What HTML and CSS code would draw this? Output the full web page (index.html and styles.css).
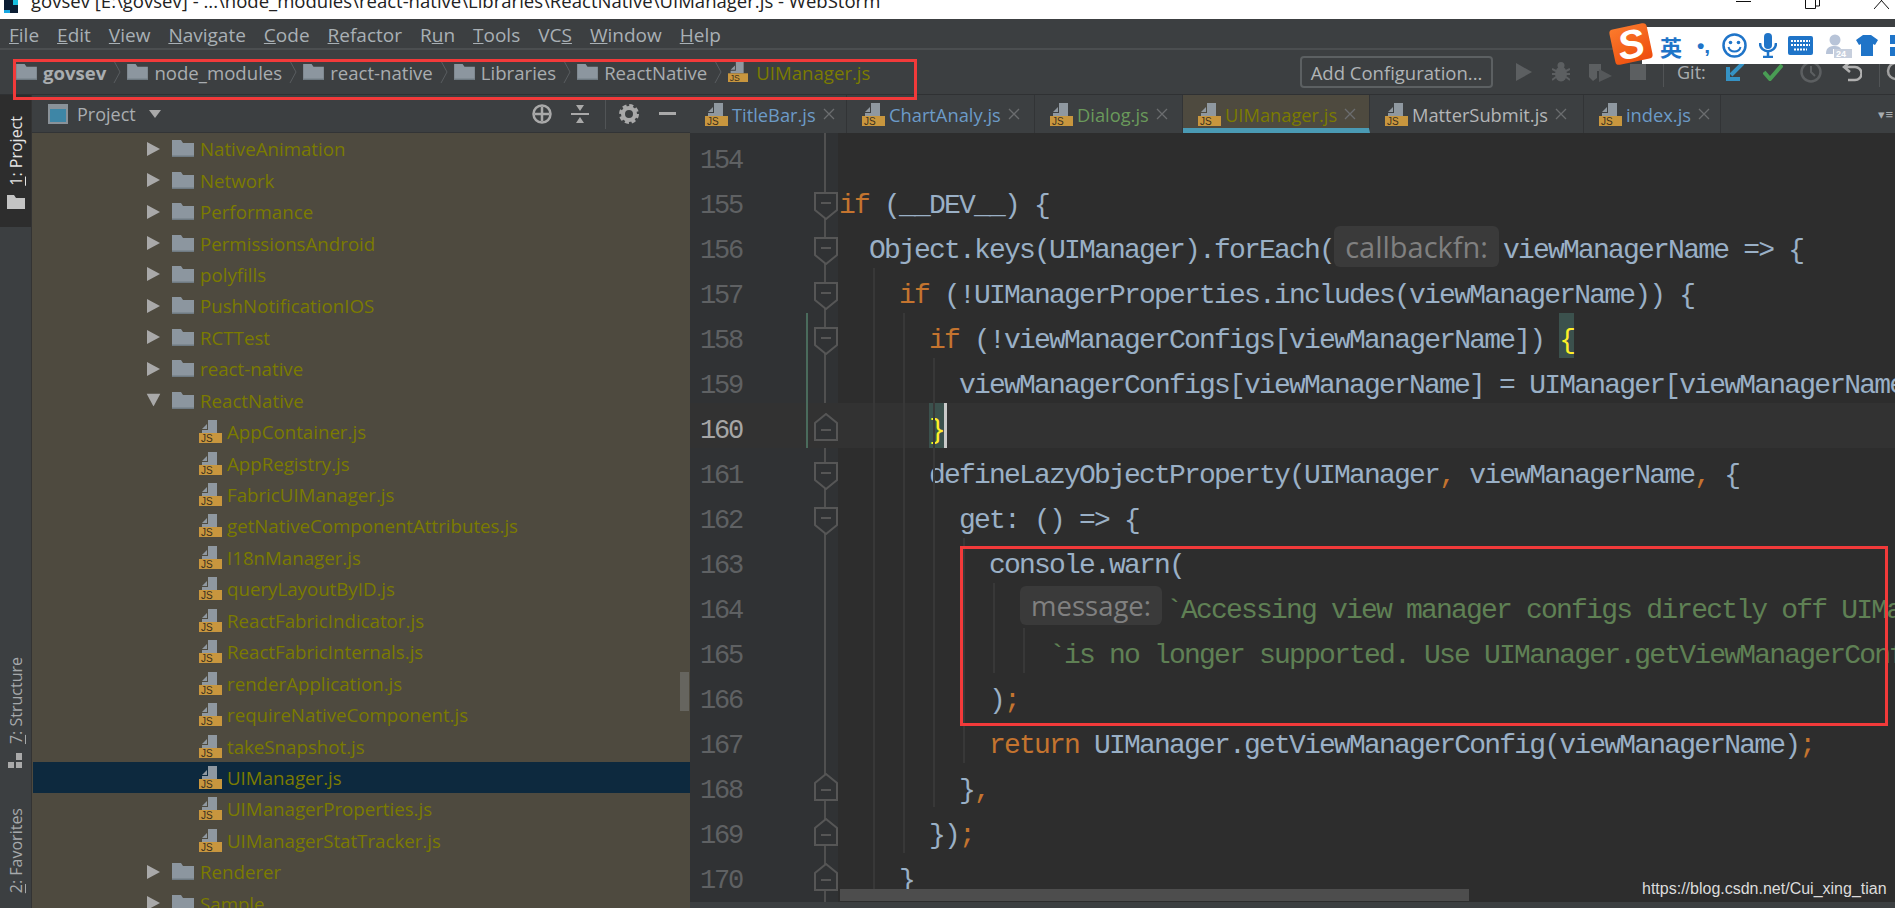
FILE: index.html
```html
<!DOCTYPE html>
<html lang="en">
<head>
<meta charset="utf-8">
<title>WebStorm</title>
<link rel="stylesheet" href="styles.css">
</head>
<body>
<svg class="defs" width="0" height="0" aria-hidden="true">
  <symbol id="js" viewBox="0 0 23 23">
    <path d="M3 13V10H9V0H18V13Z" fill="#8f98a0"/>
    <path d="M3 9L8 4V9Z" fill="#8f98a0"/>
    <rect x="0" y="13" width="23" height="10" fill="#c8963e"/>
    <text x="2" y="22" class="jst">JS</text>
  </symbol>
  <symbol id="folder" viewBox="0 0 22 17">
    <path d="M0 17V0H9L11 3H22V17Z" fill="#8c969f"/>
    <rect y="15.500" width="22" height="1.500" fill="#6f7a82"/>
  </symbol>
  <symbol id="arrow" viewBox="0 0 13 14"><path d="M0 0L13 7L0 14Z" fill="#a9a9a9"/></symbol>
  <symbol id="chev" viewBox="0 0 8 22"><path d="M1 0L7 11L1 22" fill="none" stroke="#595d60" stroke-width="1"/></symbol>
  <symbol id="fd" viewBox="0 0 24 28"><path d="M1 1H23V18L12 27L1 18Z" fill="#303234" stroke="#565656" stroke-width="2"/><path d="M7 11H17" stroke="#565656" stroke-width="2"/></symbol>
  <symbol id="fu" viewBox="0 0 24 28"><path d="M1 27H23V10L12 1L1 10Z" fill="#303234" stroke="#565656" stroke-width="2"/><path d="M7 17H17" stroke="#565656" stroke-width="2"/></symbol>
  <symbol id="x" viewBox="0 0 12 12"><path d="M1 1L11 11M11 1L1 11" stroke="#6b6d6f" stroke-width="1.300"/></symbol>
</svg>

<div class="app">
  <header class="title">
    <svg class="title-icon" width="14" height="13" viewBox="0 0 14 13"><rect width="14" height="13" fill="#0b1d33"/><rect x="0" y="10" width="6" height="3" fill="#17a6e0"/><rect x="9" y="0" width="5" height="5" fill="#17c0e0"/></svg>
    <span class="title-text">govsev [E:\govsev] - ...\node_modules\react-native\Libraries\ReactNative\UIManager.js - WebStorm</span>
    <span class="winctl">
      <svg width="15" height="3" viewBox="0 0 15 3"><path d="M0 1.500H15" stroke="#111" stroke-width="1"/></svg>
      <svg width="15" height="9" viewBox="0 0 15 9"><path d="M.5 0V8.500H10.500V0M10.500 6H14.500V0" fill="none" stroke="#111"/></svg>
      <svg width="15" height="9" viewBox="0 0 15 9"><path d="M0 9L8 0M7 0L15 9" fill="none" stroke="#111"/></svg>
    </span>
  </header>

  <nav class="menu">
    <span><u>F</u>ile</span><span><u>E</u>dit</span><span><u>V</u>iew</span><span><u>N</u>avigate</span><span><u>C</u>ode</span><span><u>R</u>efactor</span><span>R<u>u</u>n</span><span><u>T</u>ools</span><span>VC<u>S</u></span><span><u>W</u>indow</span><span><u>H</u>elp</span>
  </nav>

  <div class="nav">
    <div class="crumbs">
      <svg class="cf"><use href="#folder"/></svg><b class="crumb">govsev</b><svg class="sep"><use href="#chev"/></svg>
      <svg class="cf"><use href="#folder"/></svg><span class="crumb">node_modules</span><svg class="sep"><use href="#chev"/></svg>
      <svg class="cf"><use href="#folder"/></svg><span class="crumb">react-native</span><svg class="sep"><use href="#chev"/></svg>
      <svg class="cf"><use href="#folder"/></svg><span class="crumb">Libraries</span><svg class="sep"><use href="#chev"/></svg>
      <svg class="cf"><use href="#folder"/></svg><span class="crumb">ReactNative</span><svg class="sep"><use href="#chev"/></svg>
      <svg class="cj"><use href="#js"/></svg><span class="crumb olive">UIManager.js</span>
    </div>
    <div class="tools">
      <button class="cfg">Add Configuration...</button>
      <svg class="t-run" width="16" height="18" viewBox="0 0 16 18"><path d="M0 0L16 9L0 18Z" fill="#5c5f61"/></svg>
      <svg class="t-bug" width="18" height="20" viewBox="0 0 18 20"><ellipse cx="9" cy="12" rx="6" ry="7.500" fill="#5c5f61"/><circle cx="9" cy="3.500" r="3.500" fill="#5c5f61"/><path d="M0 7L4 9M18 7L14 9M0 12H4M18 12H14M0 18L4 15M18 18L14 15" stroke="#5c5f61" stroke-width="2"/></svg>
      <svg class="t-cov" width="24" height="20" viewBox="0 0 24 20"><path d="M1 2H13V9H9V16L5 19L1 15Z" fill="#5c5f61"/><path d="M11 7L24 14L11 20Z" fill="#55585a"/></svg>
      <svg class="t-stop" width="16" height="16" viewBox="0 0 16 16"><rect width="16" height="16" fill="#5c5f61"/></svg>
      <i class="vsep"></i>
      <span class="git">Git:</span>
      <svg class="t-a" width="20" height="20" viewBox="0 0 20 20"><path d="M18 1L6 13M3 5V17H15" fill="none" stroke="#3592c4" stroke-width="4"/></svg>
      <svg class="t-c" width="20" height="18" viewBox="0 0 20 18"><path d="M1 9L7 16L19 2" fill="none" stroke="#499c54" stroke-width="4"/></svg>
      <svg class="t-k" width="22" height="22" viewBox="0 0 22 22"><circle cx="11" cy="11" r="9.500" fill="none" stroke="#5c5f61" stroke-width="2.500"/><path d="M11 5V11L15 15" fill="none" stroke="#5c5f61" stroke-width="2"/></svg>
      <svg class="t-u" width="20" height="22" viewBox="0 0 20 22"><path d="M8 1L2 6L8 11M2 6H13A5.500 5.500 0 0 1 13 19H6" fill="none" stroke="#b0b0b0" stroke-width="2.500"/></svg>
      <i class="vsep"></i>
      <svg class="t-s" width="20" height="22" viewBox="0 0 20 22"><circle cx="12" cy="10" r="8" fill="none" stroke="#a0a0a0" stroke-width="2.500"/></svg>
    </div>
  </div>

  <main class="main">
    <aside class="strip">
      <div class="stripe active"><span class="vt"><u>1</u>: Project</span>
        <svg width="18" height="14" viewBox="0 0 18 14"><path d="M0 14V0H7L9 3H18V14Z" fill="#c4c4c4"/></svg></div>
      <div class="stripe struct"><span class="vt"><u>7</u>: Structure</span>
        <svg width="16" height="15" viewBox="0 0 16 15"><rect x="8" width="6" height="7" fill="#a9a9a9"/><rect y="9" width="6" height="6" fill="#a9a9a9"/><rect x="8" y="9" width="6" height="6" fill="#a9a9a9"/></svg></div>
      <div class="stripe fav"><span class="vt"><u>2</u>: Favorites</span></div>
    </aside>

    <section class="project">
      <div class="phead">
        <svg class="p-ic" width="20" height="20" viewBox="0 0 20 20"><rect x="1" y="1" width="18" height="18" fill="#3e86a6" stroke="#8a9299" stroke-width="2"/><rect x="2" y="2" width="16" height="3" fill="#8a9299"/></svg>
        <span class="ptitle">Project</span>
        <svg class="p-dd" width="12" height="8" viewBox="0 0 12 8"><path d="M0 0H12L6 8Z" fill="#a9a9a9"/></svg>
        <svg class="p-t" width="20" height="20" viewBox="0 0 20 20"><circle cx="10" cy="10" r="8.500" fill="none" stroke="#a9a9a9" stroke-width="2.500"/><path d="M10 3V17M3 10H17" stroke="#a9a9a9" stroke-width="2.500"/></svg>
        <svg class="p-c" width="18" height="20" viewBox="0 0 18 20"><path d="M0 10H18" stroke="#a9a9a9" stroke-width="2"/><path d="M5 1H13L9 7ZM5 19H13L9 13Z" fill="#a9a9a9"/></svg>
        <i class="vsep p-sep"></i>
        <svg class="p-g" width="20" height="20" viewBox="0 0 20 20"><circle cx="10" cy="10" r="6" fill="none" stroke="#a9a9a9" stroke-width="4"/><circle cx="10" cy="10" r="8.500" fill="none" stroke="#a9a9a9" stroke-width="3" stroke-dasharray="4 2.670"/></svg>
        <svg class="p-m" width="17" height="3" viewBox="0 0 17 3"><rect width="17" height="3" fill="#a9a9a9"/></svg>
      </div>
      <div class="tree">
        <div class="row dir"><svg class="ar"><use href="#arrow"/></svg><svg class="fo"><use href="#folder"/></svg><span>NativeAnimation</span></div>
        <div class="row dir"><svg class="ar"><use href="#arrow"/></svg><svg class="fo"><use href="#folder"/></svg><span>Network</span></div>
        <div class="row dir"><svg class="ar"><use href="#arrow"/></svg><svg class="fo"><use href="#folder"/></svg><span>Performance</span></div>
        <div class="row dir"><svg class="ar"><use href="#arrow"/></svg><svg class="fo"><use href="#folder"/></svg><span>PermissionsAndroid</span></div>
        <div class="row dir"><svg class="ar"><use href="#arrow"/></svg><svg class="fo"><use href="#folder"/></svg><span>polyfills</span></div>
        <div class="row dir"><svg class="ar"><use href="#arrow"/></svg><svg class="fo"><use href="#folder"/></svg><span>PushNotificationIOS</span></div>
        <div class="row dir"><svg class="ar"><use href="#arrow"/></svg><svg class="fo"><use href="#folder"/></svg><span>RCTTest</span></div>
        <div class="row dir"><svg class="ar"><use href="#arrow"/></svg><svg class="fo"><use href="#folder"/></svg><span>react-native</span></div>
        <div class="row dir"><svg class="ar open"><use href="#arrow"/></svg><svg class="fo"><use href="#folder"/></svg><span>ReactNative</span></div>
        <div class="row file"><svg class="ji"><use href="#js"/></svg><span>AppContainer.js</span></div>
        <div class="row file"><svg class="ji"><use href="#js"/></svg><span>AppRegistry.js</span></div>
        <div class="row file"><svg class="ji"><use href="#js"/></svg><span>FabricUIManager.js</span></div>
        <div class="row file"><svg class="ji"><use href="#js"/></svg><span>getNativeComponentAttributes.js</span></div>
        <div class="row file"><svg class="ji"><use href="#js"/></svg><span>I18nManager.js</span></div>
        <div class="row file"><svg class="ji"><use href="#js"/></svg><span>queryLayoutByID.js</span></div>
        <div class="row file"><svg class="ji"><use href="#js"/></svg><span>ReactFabricIndicator.js</span></div>
        <div class="row file"><svg class="ji"><use href="#js"/></svg><span>ReactFabricInternals.js</span></div>
        <div class="row file"><svg class="ji"><use href="#js"/></svg><span>renderApplication.js</span></div>
        <div class="row file"><svg class="ji"><use href="#js"/></svg><span>requireNativeComponent.js</span></div>
        <div class="row file"><svg class="ji"><use href="#js"/></svg><span>takeSnapshot.js</span></div>
        <div class="row file sel"><svg class="ji"><use href="#js"/></svg><span>UIManager.js</span></div>
        <div class="row file"><svg class="ji"><use href="#js"/></svg><span>UIManagerProperties.js</span></div>
        <div class="row file"><svg class="ji"><use href="#js"/></svg><span>UIManagerStatTracker.js</span></div>
        <div class="row dir"><svg class="ar"><use href="#arrow"/></svg><svg class="fo"><use href="#folder"/></svg><span>Renderer</span></div>
        <div class="row dir"><svg class="ar"><use href="#arrow"/></svg><svg class="fo"><use href="#folder"/></svg><span>Sample</span></div>
      </div>
      <div class="tree-thumb"></div>
    </section>

    <section class="editor">
      <div class="tabs">
        <div class="tab t1"><svg class="ti"><use href="#js"/></svg><span class="c-blue">TitleBar.js</span><svg class="tx"><use href="#x"/></svg></div>
        <div class="tab t2"><svg class="ti"><use href="#js"/></svg><span class="c-blue">ChartAnaly.js</span><svg class="tx"><use href="#x"/></svg></div>
        <div class="tab t3"><svg class="ti"><use href="#js"/></svg><span class="c-green">Dialog.js</span><svg class="tx"><use href="#x"/></svg></div>
        <div class="tab t4 on"><svg class="ti"><use href="#js"/></svg><span class="olive">UIManager.js</span><svg class="tx"><use href="#x"/></svg></div>
        <div class="tab t5"><svg class="ti"><use href="#js"/></svg><span class="c-plain">MatterSubmit.js</span><svg class="tx"><use href="#x"/></svg></div>
        <div class="tab t6"><svg class="ti"><use href="#js"/></svg><span class="c-blue">index.js</span><svg class="tx"><use href="#x"/></svg></div>
        <span class="tabmore">▾≡</span>
      </div>
      <div class="ebody">
        <div class="gutter">
          <div class="gl"><span>154</span></div>
          <div class="gl"><span>155</span><svg class="fold d"><use href="#fd"/></svg></div>
          <div class="gl"><span>156</span><svg class="fold d"><use href="#fd"/></svg></div>
          <div class="gl"><span>157</span><svg class="fold d"><use href="#fd"/></svg></div>
          <div class="gl"><span>158</span><svg class="fold d"><use href="#fd"/></svg></div>
          <div class="gl"><span>159</span></div>
          <div class="gl cur"><span>160</span><svg class="fold u"><use href="#fu"/></svg></div>
          <div class="gl"><span>161</span><svg class="fold d"><use href="#fd"/></svg></div>
          <div class="gl"><span>162</span><svg class="fold d"><use href="#fd"/></svg></div>
          <div class="gl"><span>163</span></div>
          <div class="gl"><span>164</span></div>
          <div class="gl"><span>165</span></div>
          <div class="gl"><span>166</span></div>
          <div class="gl"><span>167</span></div>
          <div class="gl"><span>168</span><svg class="fold u"><use href="#fu"/></svg></div>
          <div class="gl"><span>169</span><svg class="fold u"><use href="#fu"/></svg></div>
          <div class="gl"><span>170</span><svg class="fold u"><use href="#fu"/></svg></div>
          <i class="change"></i>
        </div>
        <div class="code">
          <i class="guide g1"></i><i class="guide g2"></i><i class="guide g3"></i><i class="guide g4"></i><i class="guide g5"></i><i class="guide g6"></i>
          <div class="ln"></div>
          <div class="ln"><span class="k">if</span><span> (__DEV__) {</span></div>
          <div class="ln"><span>  Object.keys(UIManager).forEach(</span><span class="hint h-cb">callbackfn:</span><span>viewManagerName =&gt; {</span></div>
          <div class="ln"><span>    </span><span class="k">if</span><span> (!UIManagerProperties.includes(viewManagerName)) {</span></div>
          <div class="ln"><span>      </span><span class="k">if</span><span> (!viewManagerConfigs[viewManagerName]) </span><span class="br">{</span></div>
          <div class="ln"><span>        viewManagerConfigs[viewManagerName] = UIManager[viewManagerName];</span></div>
          <div class="ln now"><span>      </span><span class="br">}</span><i class="caret"></i></div>
          <div class="ln"><span>      defineLazyObjectProperty(UIManager</span><span class="k">,</span><span> viewManagerName</span><span class="k">,</span><span> {</span></div>
          <div class="ln"><span>        get: () =&gt; {</span></div>
          <div class="ln"><span>          console.warn(</span></div>
          <div class="ln"><span>            </span><span class="hint h-msg">message:</span><span class="s">`Accessing view manager configs directly off UIManager via UIManager['${viewManagerName}'] ` +</span></div>
          <div class="ln"><span class="s">              `is no longer supported. Use UIManager.getViewManagerConfig('${viewManagerName}') instead.`</span></div>
          <div class="ln"><span>          )</span><span class="k">;</span></div>
          <div class="ln"><span>          </span><span class="k">return</span><span> UIManager.getViewManagerConfig(viewManagerName)</span><span class="k">;</span></div>
          <div class="ln"><span>        }</span><span class="k">,</span></div>
          <div class="ln"><span>      })</span><span class="k">;</span></div>
          <div class="ln"><span>    }</span></div>
          <div class="hscroll"></div>
        </div>
      </div>
      <div class="estatus"></div>
    </section>
  </main>

  <div class="redbox rb1"></div>
  <div class="redbox rb2"></div>
  <div class="wm">https://blog.csdn.net/Cui_xing_tian</div>
  <div class="ime">
    <div class="ime-logo"><span>S</span></div>
    <span class="ime-ying">英</span>
    <span class="ime-punc">•,</span>
    <svg class="i1" width="25" height="25" viewBox="0 0 25 25"><circle cx="12.500" cy="12.500" r="11" fill="#fff" stroke="#1f74c8" stroke-width="2.500"/><circle cx="8.500" cy="9.500" r="1.800" fill="#1f74c8"/><circle cx="16.500" cy="9.500" r="1.800" fill="#1f74c8"/><path d="M6.500 14C8 20 17 20 18.500 14" fill="none" stroke="#1f74c8" stroke-width="2"/></svg>
    <svg class="i2" width="18" height="25" viewBox="0 0 18 25"><rect x="5" width="8" height="16" rx="4" fill="#1f74c8"/><path d="M1 10C1 21 17 21 17 10M9 19V24M4 24H14" fill="none" stroke="#1f74c8" stroke-width="2.500"/></svg>
    <svg class="i3" width="25" height="19" viewBox="0 0 25 19"><rect width="25" height="19" rx="2" fill="#1f74c8"/><path d="M3 5H22M3 9H22M6 13.500H19" stroke="#fff" stroke-width="2" stroke-dasharray="2 1"/></svg>
    <svg class="i4" width="27" height="24" viewBox="0 0 27 24"><circle cx="10" cy="6" r="5.500" fill="#b8c4d8"/><path d="M1 20C1 13 5 12 10 12C13 12 15 13 16 15H8V20Z" fill="#b8c4d8"/><rect x="9" y="15" width="18" height="9" fill="#c7cfdd"/><text x="11" y="23" class="i24">24</text></svg>
    <svg class="i5" width="22" height="21" viewBox="0 0 22 21"><path d="M7 0H15L22 5L19 10L17 9V21H5V9L3 10L0 5Z" fill="#1f74c8"/></svg>
    <svg class="i6" width="8" height="21" viewBox="0 0 8 21"><rect width="8" height="9" fill="#1f74c8"/><rect y="12" width="8" height="9" fill="#1f74c8"/></svg>
  </div>
</div>
</body>
</html>
```

FILE: styles.css
```css
* { box-sizing: border-box; }
html, body { margin: 0; padding: 0; height: 100%; overflow: hidden; }
body { font-family: "Open Sans", "Noto Sans", sans-serif; background: #3c3f41; }
.defs { position: absolute; }
.jst { font: 400 10px "Liberation Sans", sans-serif; fill: #3a3020; }
.i24 { font: bold 9px "Liberation Sans", sans-serif; fill: #fff; }

.app { position: relative; width: 1895px; height: 908px; display: flex; flex-direction: column; overflow: hidden; }

.title { height: 19px; flex: none; background: #fff; display: flex; align-items: flex-start; overflow: hidden; position: relative; }
.title-icon { margin: 0 0 0 4px; flex: none; }
.title-text { margin: -11px 0 0 13px; font-size: 18.550px; line-height: 24px; color: #222; white-space: nowrap; flex: 1; }
.winctl { display: flex; gap: 54px; margin-right: 4px; width: 155px; }
.winctl svg { flex: none; }

.menu { height: 31px; flex: none; display: flex; padding: 2px 0 0 9px; align-items: center; color: #a9b0b5; font-size: 19px; border-bottom: 2px solid #4b4e50; }
.menu span { margin-right: 18px; }

.nav { height: 45px; flex: none; display: flex; align-items: center; position: relative; border-bottom: 1px solid #2f3133; }
.crumbs { display: flex; align-items: center; padding-left: 16px; color: #a9adb0; font-size: 18.600px; flex: 1; }
.cf { width: 21px; height: 16px; flex: none; margin-right: 6px; }
.cj { width: 20px; height: 22px; flex: none; margin-right: 8px; }
.crumb { font-weight: 400; white-space: nowrap; }
b.crumb { font-weight: 700; }
.sep { width: 8px; height: 22px; flex: none; margin: 0 6px 0 7px; }
.olive { color: #7b7b00; }
.tools { display: flex; align-items: center; flex: none; width: 595px; }
.cfg { width: 193px; height: 32px; margin: 0 23px 0 0; background: transparent; border: 2px solid #5c6062; border-radius: 4px; color: #b0b4b6; font: 400 18.500px "Open Sans", sans-serif; padding: 0; flex: none; }
.tools svg { flex: none; }
.t-bug { margin-left: 20px; }
.t-cov { margin-left: 18px; }
.t-stop { margin-left: 18px; }
.vsep { width: 1px; height: 30px; background: #515456; flex: none; }
.tools .vsep { margin-left: 17px; }
.git { margin-left: 13px; color: #a9adb0; font-size: 18px; }
.t-a { margin-left: 19px; }
.t-c { margin-left: 18px; }
.t-k { margin-left: 17px; }
.t-u { margin-left: 20px; }
.tools .t-s { margin-left: 4px; }

.main { flex: 1; display: flex; min-height: 0; }

.strip { width: 32px; flex: none; position: relative; display: flex; flex-direction: column; font-size: 16px; color: #a6a9ab; border-right: 1px solid #333; }
.stripe { display: flex; flex-direction: column; align-items: center; gap: 9px; }
.stripe.active { height: 132px; background: #2d2d2d; color: #e4e4e4; padding-top: 21px; }
.stripe.struct { margin-top: 430px; }
.stripe.fav { margin-top: 40px; }
.vt { writing-mode: vertical-rl; transform: rotate(180deg); white-space: nowrap; line-height: 24px; }

.project { width: 658px; flex: none; position: relative; background: #4e4a3f; display: flex; flex-direction: column; overflow: hidden; }
.phead { height: 38px; flex: none; background: #3c3f41; display: flex; align-items: center; padding-left: 16px; color: #a9adb0; border-bottom: 1px solid #323436; }
.ptitle { margin-left: 9px; font-size: 18px; }
.p-dd { margin-left: 13px; }
.p-t { margin-left: 371px; }
.p-c { margin-left: 19px; }
.p-sep { margin-left: 16px; height: 30px; }
.p-g { margin-left: 13px; }
.p-m { margin-left: 20px; }
.tree { flex: 1; min-height: 0; overflow: hidden; font-size: 18.700px; color: #7b7b00; }
.row { height: 31.450px; display: flex; align-items: center; white-space: nowrap; }
.row.sel { background: #0d293e; margin-left: 1px; padding-left: 166px; }
.dir { padding-left: 115px; }
.file { padding-left: 167px; }
.ar { width: 13px; height: 14px; flex: none; }
.ar.open { transform: rotate(90deg); }
.fo { width: 22px; height: 17px; flex: none; margin: 0 6px 0 12px; }
.ji { width: 23px; height: 23px; flex: none; margin-right: 5px; }
.tree-thumb { position: absolute; right: 1px; top: 577px; width: 9px; height: 39px; background: #66655f; }

.editor { flex: 1; min-width: 0; display: flex; flex-direction: column; background: #2d2d2d; }
.tabs { height: 38px; flex: none; display: flex; background: #3c3f41; align-items: stretch; position: relative; font-size: 18.300px; }
.tab { display: flex; align-items: center; padding-left: 15px; border-right: 1px solid #323436; white-space: nowrap; flex: none; }
.t1 { width: 157px; }
.t2 { width: 188px; }
.t3 { width: 148px; }
.t4 { width: 187px; }
.t5 { width: 214px; }
.t6 { width: 137px; }
.tab.on { background: #4e4a3f; border-bottom: 5px solid #4a9ab4; padding-top: 5px; }
.ti { width: 23px; height: 23px; flex: none; margin-right: 4px; }
.tx { width: 12px; height: 12px; flex: none; margin-left: 7px; }
.c-blue { color: #6c9bc8; }
.c-green { color: #6a9a5b; }
.c-plain { color: #b4b6b8; }
.tabmore { margin-left: auto; margin-right: 2px; color: #a9adb0; font-size: 13px; line-height: 38px; }

.ebody { flex: 1; min-height: 0; display: flex; overflow: hidden; }
.gutter { width: 148px; flex: none; background: #303234; position: relative; overflow: hidden; font: 400 27px "Liberation Mono", monospace; letter-spacing: -2.200px; color: #5f6163; }
.gutter::before { content: ""; position: absolute; left: 134px; top: 0; width: 2px; height: 100%; background: #505050; }
.gl { height: 45px; display: flex; align-items: flex-start; padding-left: 10px; position: relative; line-height: 56px; }
.gl.cur { color: #a6a6a6; background: #323232; }
.fold { width: 24px; height: 28px; margin-left: auto; }
.fold.d { margin-top: 14px; }
.fold.u { margin-top: 10px; }
.change { position: absolute; left: 116px; top: 180px; width: 2px; height: 135px; background: #4a6b5c; }

.code { flex: 1; min-width: 0; position: relative; overflow: hidden; padding-left: 1px; font: 400 28px "Liberation Mono", monospace; letter-spacing: -1.800px; color: #9ab0c6; }
.ln { height: 45px; line-height: 55px; display: flex; white-space: pre; }
.ln.now { background: #323232; margin-left: -1px; padding-left: 1px; }
.k { color: #c4742f; }
.s { color: #5f8054; }
.br { color: #ffef28; background: #3b514d; height: 45px; width: 15px; }
.caret { width: 3px; height: 45px; background: #c9c9c9; }
.hint { font: 400 27.500px "Open Sans", sans-serif; letter-spacing: 0; color: #808080; background: #3a3a3a; border-radius: 6px; height: 41px; line-height: 41px; margin-top: 3px; text-align: center; flex: none; }
.h-cb { width: 165px; margin-right: 4px; font-size: 29px; }
.h-msg { width: 142px; margin: 3px 4px 0 1px; height: 39px; line-height: 39px; }
.guide { position: absolute; width: 2px; background: #383838; }
.g1 { left: 35px; top: 135px; height: 629px; }
.g2 { left: 65px; top: 180px; height: 540px; }
.g3 { left: 95px; top: 225px; height: 449px; }
.g4 { left: 125px; top: 405px; height: 225px; }
.g5 { left: 155px; top: 450px; height: 90px; }
.g6 { left: 185px; top: 495px; height: 45px; }
.hscroll { position: absolute; left: 2px; top: 756px; width: 629px; height: 12px; background: #4d4d4d; }
.estatus { height: 6px; flex: none; background: #3c3f41; }

.redbox { position: absolute; border: 3px solid #f23a3a; }
.rb1 { left: 13px; top: 59px; width: 904px; height: 41px; }
.rb2 { left: 960px; top: 546px; width: 928px; height: 180px; }
.wm { position: absolute; left: 1642px; top: 878px; font: 400 16px/22px "Liberation Sans", sans-serif; color: #dcdcdc; white-space: nowrap; }

.ime { position: absolute; left: 1642px; top: 27px; width: 253px; height: 37px; background: #fff; display: flex; align-items: center; color: #1f74c8; }
.ime-logo { position: absolute; left: -30px; top: -1px; width: 38px; height: 36px; border-radius: 4px; background: linear-gradient(160deg, #fb7a2c, #ee4c0c); transform: rotate(-12deg); display: flex; align-items: center; justify-content: center; }
.ime-logo span { color: #fff; font: italic 700 40px/36px "Liberation Sans", sans-serif; }
.ime-ying { margin-left: 18px; font: 700 22px "Noto Sans CJK SC", sans-serif; line-height: 30px; }
.ime-punc { margin-left: 15px; font: 700 21px "Liberation Sans", sans-serif; width: 16px; }
.ime svg { flex: none; }
.i1 { margin-left: 12px; }
.i2 { margin-left: 12px; }
.i3 { margin-left: 11px; }
.i4 { margin-left: 12px; }
.i5 { margin-left: 4px; }
.i6 { margin-left: 12px; }
```
